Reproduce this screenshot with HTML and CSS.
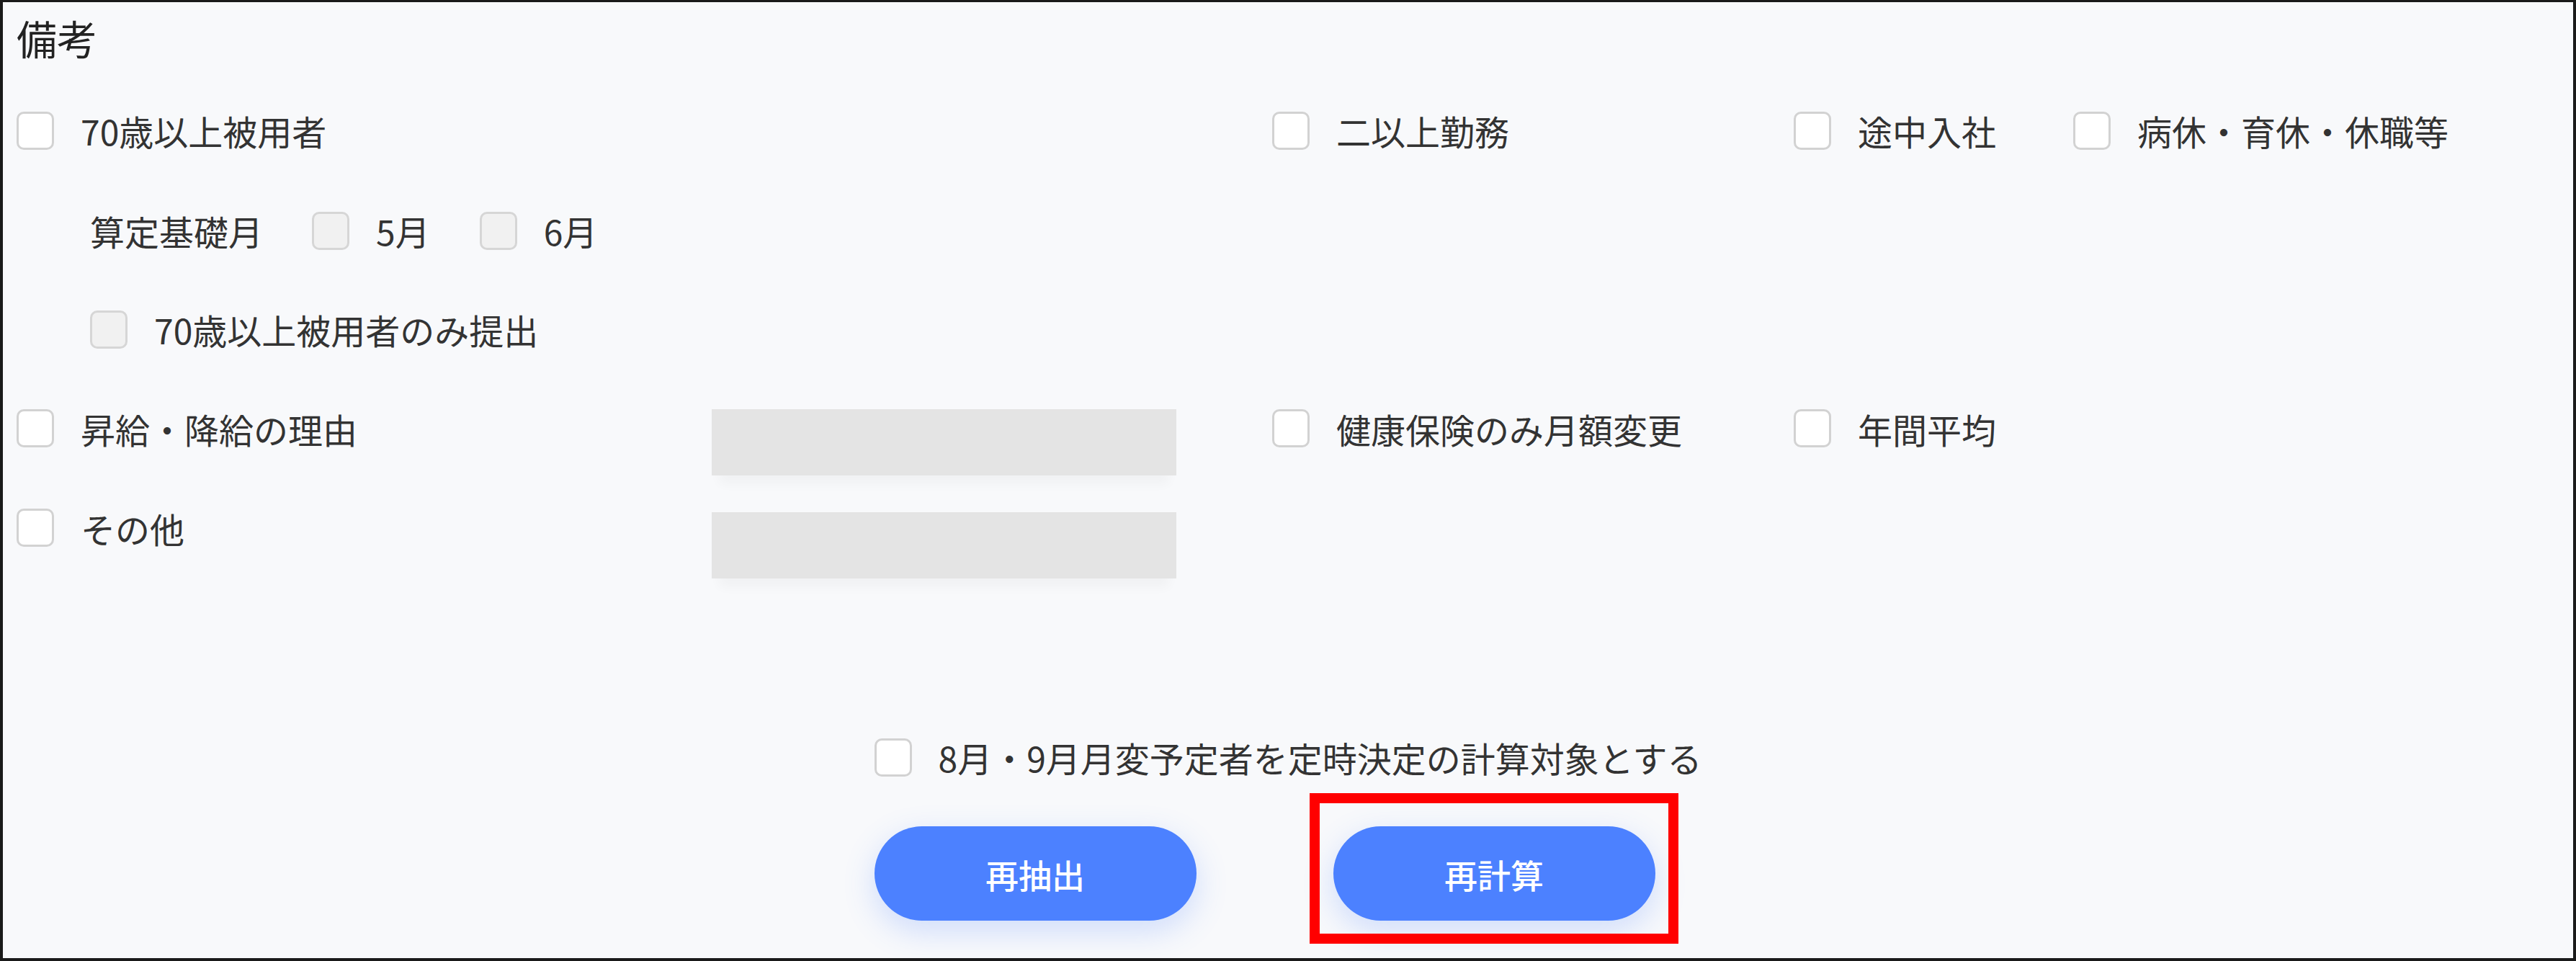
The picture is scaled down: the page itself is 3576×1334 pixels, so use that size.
FILE: index.html
```html
<!DOCTYPE html>
<html lang="ja">
<head>
<meta charset="utf-8">
<title>備考</title>
<link rel="stylesheet" href="styles.css">
</head>
<body>
<div class="frame">
  <h2 class="title">備考</h2>

  <div class="row r1">
    <label class="check c1"><span class="box"></span><span>70歳以上被用者</span></label>
    <label class="check c4"><span class="box"></span><span>二以上勤務</span></label>
    <label class="check c5"><span class="box"></span><span>途中入社</span></label>
    <label class="check c6"><span class="box"></span><span>病休・育休・休職等</span></label>
  </div>

  <div class="sub r2">
    <span class="sub-label">算定基礎月</span>
    <label class="check opt"><span class="box dis"></span><span>5月</span></label>
    <label class="check opt"><span class="box dis"></span><span>6月</span></label>
  </div>

  <div class="sub r3">
    <label class="check"><span class="box dis"></span><span>70歳以上被用者のみ提出</span></label>
  </div>

  <div class="row r4">
    <label class="check c1"><span class="box"></span><span>昇給・降給の理由</span></label>
    <div class="field c2"></div>
    <label class="check c4"><span class="box"></span><span>健康保険のみ月額変更</span></label>
    <label class="check c5"><span class="box"></span><span>年間平均</span></label>
  </div>

  <div class="row r5">
    <label class="check c1"><span class="box"></span><span>その他</span></label>
    <div class="field c2 f2"></div>
  </div>

  <div class="bottom">
    <div class="bottom-inner">
      <label class="check final"><span class="box"></span><span>8月・9月月変予定者を定時決定の計算対象とする</span></label>
      <div class="buttons">
        <button class="btn">再抽出</button>
        <div class="hl-wrap">
          <button class="btn">再計算</button>
          <div class="annot"></div>
        </div>
      </div>
    </div>
  </div>
</div>
</body>
</html>
```

FILE: styles.css
```css
html, body {
  margin: 0;
  padding: 0;
}
body {
  font-family: "Noto Sans CJK JP", "Noto Sans", sans-serif;
  color: #333333;
  background: #f8f9fb;
}
.frame {
  box-sizing: border-box;
  width: 100%;
  height: 1334px;
  border-style: solid;
  border-color: #1a1a1a;
  border-width: 3px 4px 4px 4px;
  background: #f8f9fb;
  padding: 17px 0 0 19px;
  display: flex;
  flex-direction: column;
}
.title {
  margin: 0;
  font-size: 56px;
  line-height: 64px;
  font-weight: 400;
  color: #222222;
}
.row {
  display: grid;
  grid-template-columns: 965px 645px 133px 724px 388px 1fr;
}
.r1 {
  margin-top: 67px;
  height: 60px;
  align-items: center;
}
.c1 { grid-column: 1; }
.c2 { grid-column: 2; }
.c4 { grid-column: 4; }
.c5 { grid-column: 5; }
.c6 { grid-column: 6; }

.check {
  display: flex;
  align-items: center;
  gap: 37px;
  font-size: 48px;
  line-height: 1;
  white-space: nowrap;
}
.box {
  box-sizing: border-box;
  flex: none;
  width: 52px;
  height: 53px;
  border: 3px solid #d2d2d2;
  border-radius: 10px;
  background: #ffffff;
}
.box.dis {
  background: #f1f1f1;
  border-color: #d6d6d6;
}

.sub {
  display: flex;
  align-items: center;
  height: 60px;
  padding-left: 102px;
}
.r2 { margin-top: 79px; }
.r3 { margin-top: 77px; }
.sub-label {
  font-size: 48px;
  line-height: 1;
  margin-right: 68px;
}
.opt { margin-right: 69px; }

.r4 {
  margin-top: 81px;
  align-items: start;
}
.r4 .check, .r5 .check {
  height: 53px;
}
.r5 {
  margin-top: 46px;
  align-items: start;
}
.field {
  height: 92px;
  background: #e4e4e4;
  box-shadow: 0 22px 14px -10px rgba(0, 0, 0, 0.03);
}
.f2 { margin-top: 5px; }

.bottom {
  margin-top: 218px;
  display: flex;
  justify-content: center;
  margin-left: -19px;
}
.bottom-inner {
  display: flex;
  flex-direction: column;
  align-items: flex-start;
}
.final {
  height: 60px;
}
.buttons {
  margin-top: 66px;
  display: flex;
  gap: 190px;
}
.btn {
  width: 447px;
  height: 131px;
  border: none;
  border-radius: 66px;
  background: #4c81ff;
  color: #ffffff;
  font-family: "Noto Sans CJK JP", "Noto Sans", sans-serif;
  font-size: 46px;
  font-weight: 500;
  box-shadow: 0 14px 44px rgba(76, 129, 255, 0.24);
  padding: 0;
}
.hl-wrap {
  position: relative;
  display: flex;
}
.annot {
  position: absolute;
  left: -33px;
  top: -46px;
  right: -32px;
  bottom: -32px;
  border: 14px solid #ff0000;
  pointer-events: none;
}
```
